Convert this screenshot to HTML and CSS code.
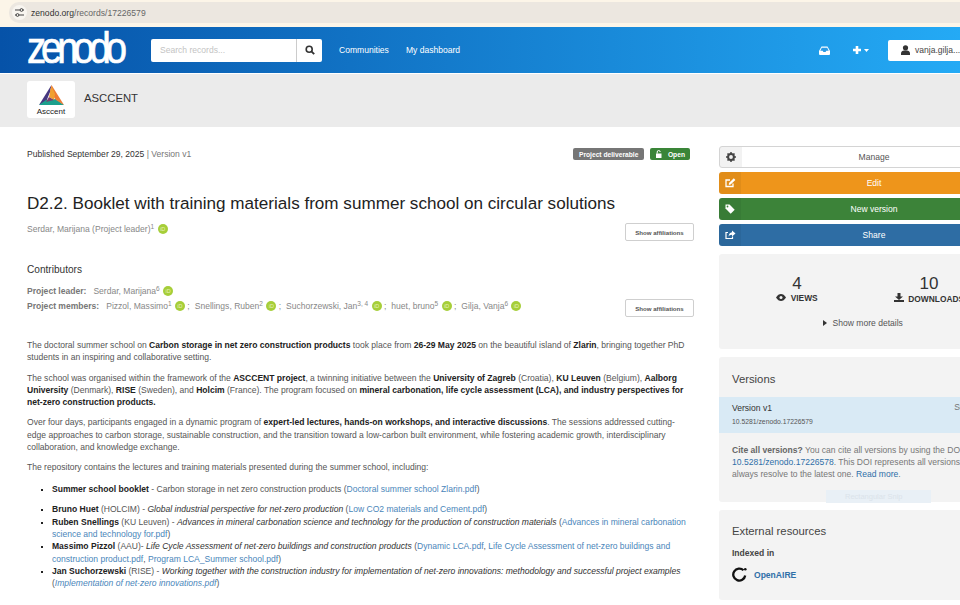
FILE: index.html
```html
<!DOCTYPE html>
<html lang="en">
<head>
    <meta charset="UTF-8">
    <title>D2.2. Booklet with training materials - Zenodo</title>
    <link rel="stylesheet" href="styles.css">
</head>
<body>
<div class="page">
    <!-- Browser address bar -->
    <div class="browser-bar">
        <div class="url-pill">
            <span class="url-icon">
                <svg width="11" height="11" viewBox="0 0 11 11"><path d="M1 3h5M9 3h1M1 8h1M5 8h5" stroke="#444" stroke-width="1.2" fill="none"/><circle cx="7.5" cy="3" r="1.4" fill="none" stroke="#444"/><circle cx="3.5" cy="8" r="1.4" fill="none" stroke="#444"/></svg>
            </span>
            <span class="url-host">zenodo.org</span><span class="url-path">/records/17226579</span>
        </div>
    </div>

    <!-- Main navigation -->
    <header class="site-header">
        <div class="logo-wrap"><span class="logo">zenodo</span></div>
        <div class="search">
            <div class="search-input">Search records...</div>
            <div class="search-btn">
                <svg width="10" height="10" viewBox="0 0 10 10"><circle cx="4.2" cy="4.2" r="3" fill="none" stroke="#333" stroke-width="1.6"/><path d="M6.4 6.4L9.2 9.2" stroke="#333" stroke-width="1.9"/></svg>
            </div>
        </div>
        <nav class="main-nav">
            <a href="#">Communities</a>
            <a href="#">My dashboard</a>
        </nav>
        <div class="user-nav">
            <svg class="inbox" width="11" height="9" viewBox="0 0 11 9"><path d="M2.5 0.5h6L11 5v3a1 1 0 0 1-1 1H1a1 1 0 0 1-1-1V5z" fill="#fff"/><path d="M2.8 1.8h5.4L9.7 4.8H7.3L6.6 6H4.4L3.7 4.8H1.3z" fill="#2a9ae6"/></svg>
            <span class="plus-menu">
                <svg width="10" height="10" viewBox="0 0 10 10"><path d="M3.7 1h2.6v2.7H9v2.6H6.3V9H3.7V6.3H1V3.7h2.7z" fill="#fff"/></svg>
                <svg width="5" height="3" viewBox="0 0 5 3"><path d="M0 0h5L2.5 3z" fill="#fff"/></svg>
            </span>
            <div class="user-btn">
                <svg width="9" height="10" viewBox="0 0 9 10"><circle cx="4.5" cy="2.8" r="2.6" fill="#333"/><path d="M0 10V8.2C0 6.6 1.5 5.6 3 5.4h3c1.5.2 3 1.2 3 2.8V10z" fill="#333"/></svg>
                <span>vanja.gilja...</span>
            </div>
        </div>
    </header>

    <!-- Community strip -->
    <div class="community-bar">
        <div class="community-logo">
            <svg width="25" height="22" viewBox="0 0 25 22">
                <polygon points="12.5,0 0,20 7,17 11,7" fill="#46377f"/>
                <polygon points="0,20 25,20 17,14 7,15" fill="#1c9f8c"/>
                <polygon points="12.5,0 25,20 17,15 11,7" fill="#ee7b35"/>
                <polygon points="12.5,1 16,9 15,15 10,12" fill="#f0a032"/>
                <polygon points="10,12 15,15 7,17" fill="#7a3f6e"/>
            </svg>
            <span>Asccent</span>
        </div>
        <span class="community-name">ASCCENT</span>
    </div>

    <div class="content">
        <main class="record">
            <div class="record-top">
                <div class="published">Published September 29, 2025 <span class="muted">| Version v1</span></div>
                <div class="labels">
                    <span class="label label-grey">Project deliverable</span>
                    <span class="label label-green">
                        <svg width="8" height="8" viewBox="0 0 8 8"><path d="M1 3.5h5.5V8H1z" fill="#fff"/><path d="M2.2 3.5V2a1.5 1.5 0 0 1 3 0" fill="none" stroke="#fff" stroke-width="1"/></svg>
                        Open
                    </span>
                </div>
            </div>

            <h1 class="title">D2.2. Booklet with training materials from summer school on circular solutions</h1>

            <div class="creators">
                <div class="people">Serdar, Marijana (Project leader)<sup>1</sup> <span class="orcid">iD</span></div>
                <button class="aff-btn">Show affiliations</button>
            </div>

            <h2 class="contrib-title">Contributors</h2>
            <div class="contrib-row"><strong>Project leader:</strong><span class="person">Serdar, Marijana<sup>6</sup> <span class="orcid">iD</span></span></div>
            <div class="members">
                <div class="contrib-row">
                    <strong>Project members:</strong>
                    <span class="person">Pizzol, Massimo<sup>1</sup> <span class="orcid">iD</span> ;</span>
                    <span class="person">Snellings, Ruben<sup>2</sup> <span class="orcid">iD</span> ;</span>
                    <span class="person">Suchorzewski, Jan<sup>3, 4</sup> <span class="orcid">iD</span> ;</span>
                    <span class="person">huet, bruno<sup>5</sup> <span class="orcid">iD</span> ;</span>
                    <span class="person">Gilja, Vanja<sup>6</sup> <span class="orcid">iD</span></span>
                </div>
                <button class="aff-btn aff-btn-low">Show affiliations</button>
            </div>

            <div class="description">
                <p>The doctoral summer school on <b>Carbon storage in net zero construction products</b> took place from <b>26-29 May 2025</b> on the beautiful island of <b>Zlarin</b>, bringing together PhD students in an inspiring and collaborative setting.</p>
                <p>The school was organised within the framework of the <b>ASCCENT project</b>, a twinning initiative between the <b>University of Zagreb</b> (Croatia), <b>KU Leuven</b> (Belgium), <b>Aalborg University</b> (Denmark), <b>RISE</b> (Sweden), and <b>Holcim</b> (France). The program focused on <b>mineral carbonation, life cycle assessment (LCA), and industry perspectives for net-zero construction products.</b></p>
                <p>Over four days, participants engaged in a dynamic program of <b>expert-led lectures, hands-on workshops, and interactive discussions</b>. The sessions addressed cutting-edge approaches to carbon storage, sustainable construction, and the transition toward a low-carbon built environment, while fostering academic growth, interdisciplinary collaboration, and knowledge exchange.</p>
                <p>The repository contains the lectures and training materials presented during the summer school, including:</p>
                <ul>
                    <li><b>Summer school booklet</b> - Carbon storage in net zero construction products (<a href="#">Doctoral summer school Zlarin.pdf</a>)</li>
                </ul>
                <ul class="speakers">
                    <li><b>Bruno Huet</b> (HOLCIM) - <i>Global industrial perspective for net-zero production</i> (<a href="#">Low CO2 materials and Cement.pdf</a>)</li>
                    <li><b>Ruben Snellings</b> (KU Leuven) - <i>Advances in mineral carbonation science and technology for the production of construction materials</i> (<a href="#">Advances in mineral carbonation science and technology for.pdf</a>)</li>
                    <li><b>Massimo Pizzol</b> (AAU)- <i>Life Cycle Assessment of net-zero buildings and construction products</i> (<a href="#">Dynamic LCA.pdf</a>, <a href="#">Life Cycle Assessment of net-zero buildings and construction product.pdf</a>, <a href="#">Program LCA_Summer school.pdf</a>)</li>
                    <li><b>Jan Suchorzewski</b> (RISE) - <i>Working together with the construction industry for implementation of net-zero innovations: methodology and successful project examples</i> (<a href="#"><i>Implementation of net-zero innovations.pdf</i></a>)</li>
                </ul>
            </div>
        </main>

        <aside class="sidebar">
            <div class="actions">
                <div class="action action-manage">
                    <span class="action-icon"><svg width="10" height="10" viewBox="0 0 10 10"><circle cx="5" cy="5" r="2.9" fill="none" stroke="#444" stroke-width="2"/><path d="M5 0v2M5 8v2M0 5h2M8 5h2M1.5 1.5l1.4 1.4M7.1 7.1l1.4 1.4M1.5 8.5l1.4-1.4M7.1 2.9l1.4-1.4" stroke="#444" stroke-width="1.5"/></svg></span>
                    <span class="action-label">Manage</span>
                </div>
                <div class="action action-edit">
                    <span class="action-icon"><svg width="11" height="10" viewBox="0 0 11 10"><path d="M8 5.5V8.5H1V2H5" fill="none" stroke="#fff" stroke-width="1.3"/><path d="M4 5L8.8 0.3 10.4 1.9 5.6 6.6 3.8 6.9z" fill="#fff"/></svg></span>
                    <span class="action-label">Edit</span>
                </div>
                <div class="action action-version">
                    <span class="action-icon"><svg width="10" height="10" viewBox="0 0 10 10"><path d="M0.5 0.5H4.5L9.7 5.7 5.7 9.7 0.5 4.5z" fill="#fff"/><circle cx="2.5" cy="2.5" r="0.9" fill="#3c8339"/></svg></span>
                    <span class="action-label">New version</span>
                </div>
                <div class="action action-share">
                    <span class="action-icon"><svg width="11" height="10" viewBox="0 0 11 10"><path d="M7.5 6.5V8.5H1V2.5H3" fill="none" stroke="#fff" stroke-width="1.2"/><path d="M7 0.5L10.5 3.5 7 6.5V4.7C5.3 4.7 4.2 5.4 3.6 6.6 3.7 4.2 5 2.5 7 2.3z" fill="#fff"/></svg></span>
                    <span class="action-label">Share</span>
                </div>
            </div>

            <section class="card stats">
                <div class="stat-grid">
                    <div class="stat">
                        <div class="stat-num">4</div>
                        <div class="stat-label"><svg width="10" height="7" viewBox="0 0 10 7"><path d="M0 3.5C1.5 1 3.2 0 5 0s3.5 1 5 3.5C8.5 6 6.8 7 5 7S1.5 6 0 3.5z" fill="#333"/><circle cx="5" cy="3.5" r="1.5" fill="#f3f3f3"/></svg> VIEWS</div>
                    </div>
                    <div class="stat">
                        <div class="stat-num">10</div>
                        <div class="stat-label"><svg width="10" height="9" viewBox="0 0 10 9"><path d="M3.5 0h3v3.5H9L5 7 1 3.5h2.5z" fill="#333"/><path d="M0 7h10v2H0z" fill="#333"/></svg> DOWNLOADS</div>
                    </div>
                </div>
                <div class="more-details"><svg width="4" height="6" viewBox="0 0 4 6"><path d="M0 0l4 3-4 3z" fill="#333"/></svg> Show more details</div>
            </section>

            <section class="card versions">
                <h3 class="card-title">Versions</h3>
                <div class="version-row">
                    <div class="version-main">
                        <div class="version-name">Version v1</div>
                        <div class="version-doi">10.5281/zenodo.17226579</div>
                    </div>
                    <div class="version-date">Sep 29, 2025</div>
                </div>
                <p class="cite"><b>Cite all versions?</b> You can cite all versions by using the DOI <a href="#">10.5281/zenodo.17226578</a>. This DOI represents all versions, and will always resolve to the latest one. <a href="#">Read more</a>.</p>
                <div class="snip-ghost">Rectangular Snip</div>
            </section>

            <section class="card external">
                <h3 class="card-title">External resources</h3>
                <div class="indexed">Indexed in</div>
                <div class="openaire">
                    <svg width="15" height="15" viewBox="0 0 15 15"><path d="M11.5 3.3A6 6 0 1 0 13.2 8.5" fill="none" stroke="#111" stroke-width="2.3"/><circle cx="13.3" cy="2.3" r="1.3" fill="#111"/></svg>
                    <a href="#">OpenAIRE</a>
                </div>
            </section>
        </aside>
    </div>
</div>
</body>
</html>
```

FILE: styles.css
```css
/* Basic styling */
html, body {
    margin: 0;
    padding: 0;
    height: 605px;
    overflow: hidden;
    background: #fff;
}
body {
    font-family: "Liberation Sans", Arial, sans-serif;
    font-size: 8.55px;
    color: #555;
}
a {
    color: #2f6fa8;
    text-decoration: none;
}
.page {
    width: 1034px;
}

/* Browser bar */
.browser-bar {
    height: 27px;
    box-sizing: border-box;
    padding: 2px 0 4px;
    background: #fcf5e8;
}
.url-pill {
    height: 21px;
    margin-left: 9px;
    display: flex;
    align-items: center;
    background: #ece7e0;
    border-radius: 10px 0 0 10px;
    font-size: 8.6px;
}
.url-icon {
    width: 15px;
    height: 15px;
    margin: 0 4px 0 3px;
    display: flex;
    align-items: center;
    justify-content: center;
    background: #f8f5f0;
    border-radius: 50%;
}
.url-host {
    color: #333;
}
.url-path {
    color: #666;
}

/* Header */
.site-header {
    height: 46px;
    box-sizing: border-box;
    padding: 0 27px;
    display: flex;
    align-items: center;
    background: linear-gradient(to right, #0652a8, #24aaf5 93%);
}
.logo-wrap {
    width: 124px;
    height: 46px;
}
.logo {
    display: block;
    margin-top: -4px;
    color: #fff;
    font-size: 45px;
    line-height: 50px;
    letter-spacing: -6px;
    transform: scaleX(0.85);
    transform-origin: left center;
    -webkit-text-stroke: 0.7px #fff;
}
.search {
    display: flex;
    width: 171px;
    height: 23px;
    background: #fff;
    border-radius: 2px;
}
.search-input {
    flex: 1;
    padding-left: 9px;
    line-height: 23px;
    color: #c4c4c4;
    border-right: 1px solid #ccc;
}
.search-btn {
    width: 25px;
    display: flex;
    align-items: center;
    justify-content: center;
}
.main-nav {
    display: flex;
    gap: 17px;
    margin-left: 17px;
}
.main-nav a {
    color: #fff;
}
.user-nav {
    margin-left: auto;
    display: flex;
    align-items: center;
}
.inbox {
    margin-right: 22px;
}
.plus-menu {
    display: flex;
    align-items: center;
    gap: 2px;
    margin-right: 19px;
}
.user-btn {
    width: 119px;
    height: 21px;
    box-sizing: border-box;
    padding-left: 13px;
    display: flex;
    align-items: center;
    gap: 5px;
    background: #fff;
    border-radius: 2px;
    color: #444;
}

/* Community strip */
.community-bar {
    height: 53px;
    margin-top: 1px;
    padding-left: 27px;
    display: flex;
    align-items: center;
    gap: 9px;
    background: #ebebeb;
}
.community-logo {
    width: 48px;
    height: 37px;
    margin-bottom: 2px;
    display: flex;
    flex-direction: column;
    align-items: center;
    justify-content: flex-end;
    background: #fff;
    border-radius: 3px;
    color: #222;
    font-size: 8px;
    line-height: 10px;
    padding-bottom: 1px;
    box-sizing: border-box;
}
.community-name {
    margin-bottom: 5px;
    font-size: 11.3px;
    color: #333;
}

/* Two columns */
.content {
    display: flex;
    gap: 25px;
    padding: 19px 27px 0;
}
.record {
    width: 667px;
    flex-shrink: 0;
}
.sidebar {
    width: 288px;
    flex-shrink: 0;
}
.record-top {
    height: 14px;
    display: flex;
    justify-content: space-between;
    align-items: center;
    margin-top: 1px;
    color: #333;
}
.muted {
    color: #777;
}
.labels {
    display: flex;
    gap: 6px;
    margin-right: 4px;
}
.label {
    height: 12px;
    padding: 0 5px;
    display: flex;
    align-items: center;
    gap: 5px;
    border-radius: 2px;
    color: #fff;
    font-size: 6.7px;
    font-weight: bold;
}
.label-grey {
    padding: 0 5.5px;
    background: #767676;
}
.label-green {
    background: #3a8538;
}
.title {
    margin: 31px 0 0;
    font-size: 17.1px;
    font-weight: normal;
    line-height: 24px;
    color: #222;
}
.creators {
    display: flex;
    justify-content: space-between;
    align-items: flex-start;
    margin-top: 7px;
    color: #888;
}
.people {
    padding-top: 1px;
}
sup {
    font-size: 6.5px;
    line-height: 0;
    vertical-align: 3px;
}
.orcid {
    display: inline-block;
    overflow: hidden;
    width: 10px;
    height: 10px;
    border-radius: 50%;
    background: #a6ce39;
    color: #e6f2bd;
    font-size: 5.5px;
    line-height: 10px;
    text-align: center;
    vertical-align: -2px;
    margin-left: 1px;
}
.aff-btn {
    width: 69px;
    height: 18px;
    padding: 0;
    background: #fff;
    border: 1px solid #cfcfcf;
    border-radius: 2px;
    color: #555;
    font-family: inherit;
    font-size: 6.1px;
    font-weight: bold;
}
.aff-btn-low {
    margin-top: 7px;
}
.contrib-title {
    margin: 22px 0 0;
    font-size: 10.1px;
    line-height: 14px;
    font-weight: normal;
    color: #333;
}
.contrib-row {
    display: flex;
    gap: 5px;
    margin-top: 8px;
    line-height: 12px;
    color: #888;
}
.contrib-row strong {
    color: #777;
    margin-right: 2px;
}
.members {
    display: flex;
    justify-content: space-between;
    align-items: flex-start;
    margin-top: -5px;
}
.description {
    margin-top: 22px;
    padding-right: 6px;
    line-height: 12.3px;
    color: #555;
}
.description p {
    margin: 0 0 8px;
}
.description b {
    color: #222;
}
.description ul {
    margin: 9px 0 0;
    padding-left: 25px;
    list-style: square;
}
.description .speakers {
    margin-top: 8.5px;
}
.description li {
    color: #555;
}
.description li::marker {
    color: #222;
    font-size: 7px;
}
.description i {
    color: #333;
}
.description a,
.description a i {
    color: #4a86ba;
}

/* Sidebar */
.actions {
    display: flex;
    flex-direction: column;
    gap: 4px;
}
.action {
    height: 22px;
    display: flex;
    border-radius: 3px;
    overflow: hidden;
    color: #fff;
    line-height: 22px;
}
.action-icon {
    width: 22px;
    display: flex;
    align-items: center;
    justify-content: center;
    background: rgba(0, 0, 0, 0.05);
}
.action-label {
    flex: 1;
    text-align: center;
}
.action-manage {
    box-sizing: border-box;
    border: 1px solid #d4d4d4;
    line-height: 20px;
    color: #555;
}
.action-edit {
    background: #ee951b;
}
.action-version {
    background: #3c8339;
}
.action-share {
    background: #2e6da4;
}
.card {
    position: relative;
    margin-top: 8px;
    background: #f3f3f3;
    border-radius: 3px;
}
.stats {
    height: 95px;
    box-sizing: border-box;
    padding: 21px 12px 0;
}
.stat-grid {
    display: grid;
    grid-template-columns: 1fr 1fr;
    text-align: center;
}
.stat-num {
    font-size: 17px;
    line-height: 17px;
    color: #333;
}
.stat-label {
    margin-top: 1px;
    font-size: 8.4px;
    line-height: 11px;
    font-weight: bold;
    color: #333;
}
.stat-label svg {
    margin-right: 2px;
}
.more-details {
    margin-top: 13px;
    text-align: center;
    color: #555;
}
.more-details svg {
    margin-right: 3px;
}
.card-title {
    margin: 0;
    font-size: 11.3px;
    line-height: 14px;
    font-weight: normal;
    color: #444;
}
.versions {
    height: 145px;
    padding-top: 14px;
    box-sizing: border-box;
}
.versions .card-title {
    padding-left: 13px;
    padding-top: 1px;
}
.version-row {
    height: 36px;
    margin-top: 11px;
    box-sizing: border-box;
    padding: 5px 2px 0 13px;
    display: flex;
    justify-content: space-between;
    background: #d9eaf5;
}
.version-name {
    line-height: 12px;
    color: #333;
}
.version-doi {
    margin-top: 3px;
    font-size: 6.8px;
    line-height: 10px;
    color: #555;
}
.version-date {
    color: #777;
}
.cite {
    margin: 11px 0 0;
    padding: 0 5px 0 13px;
    line-height: 12.2px;
    color: #777;
}
.cite b {
    color: #666;
}
.snip-ghost {
    position: absolute;
    left: 107px;
    top: 133px;
    width: 105px;
    height: 13px;
    padding-left: 19px;
    box-sizing: border-box;
    background: #e9f0f6;
    color: #dbe3ea;
    font-size: 7.5px;
    line-height: 13px;
}
.external {
    height: 90px;
    box-sizing: border-box;
    padding: 14px 13px 0;
}
.indexed {
    margin-top: 9px;
    line-height: 12px;
    font-weight: bold;
    color: #444;
}
.openaire {
    margin-top: 8px;
    display: flex;
    align-items: center;
    gap: 7px;
    font-weight: bold;
}
```
